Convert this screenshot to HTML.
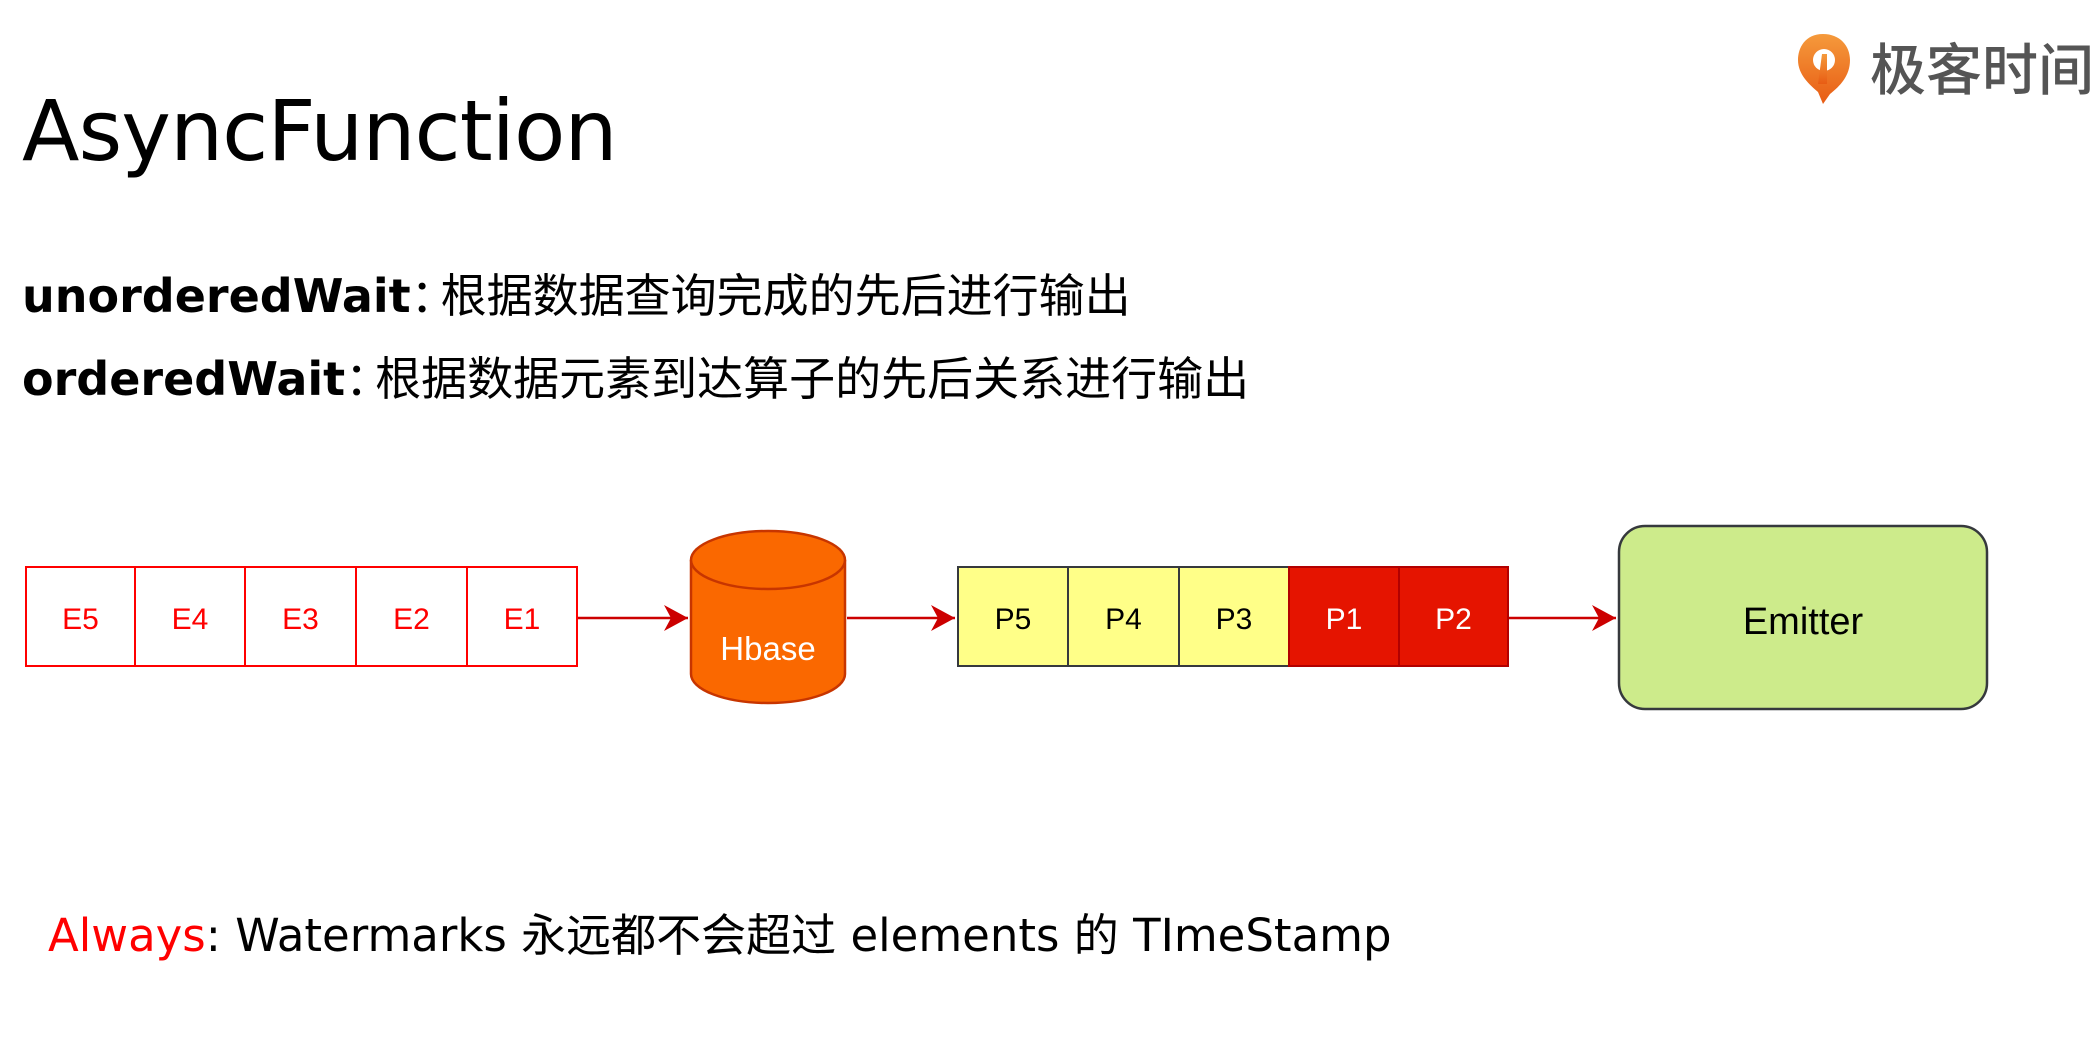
<!DOCTYPE html>
<html><head><meta charset="utf-8"><style>
html,body{margin:0;padding:0;background:#fff;width:2092px;height:1056px;overflow:hidden;position:relative;font-family:"Liberation Sans","Noto Sans CJK SC",sans-serif}
.abs{position:absolute;white-space:nowrap}
.title{left:22px;top:76px;font-size:84px;line-height:110px;color:#000;font-family:"DejaVu Sans","Liberation Sans",sans-serif;letter-spacing:-1px}
.l{font-size:46px;line-height:60px;color:#000}
.l b{font-family:"DejaVu Sans",sans-serif;font-weight:bold;letter-spacing:0px}
.l span{font-family:"Noto Sans CJK SC",sans-serif}
.l i{font-style:normal;font-family:"Noto Sans CJK SC",sans-serif;display:inline-block;width:30px;overflow:visible}
.cell{position:absolute;box-sizing:border-box;display:flex;align-items:center;justify-content:center;font-size:30px;padding-top:6px}
.bot{left:48px;top:906px;font-size:45px;line-height:60px;font-family:"DejaVu Sans","Noto Sans CJK SC",sans-serif}
</style></head><body>
<div class="abs title">AsyncFunction</div>
<div class="abs l" style="left:22px;top:263px"><b>unorderedWait</b><i>：</i><span>根据数据查询完成的先后进行输出</span></div>
<div class="abs l" style="left:22px;top:346px"><b>orderedWait</b><i>：</i><span>根据数据元素到达算子的先后关系进行输出</span></div>

<svg class="abs" style="left:0;top:0" width="2092" height="1056">
<defs><marker id="a" markerWidth="26" markerHeight="26" refX="24" refY="13" orient="auto" markerUnits="userSpaceOnUse"><path d="M0,0 L24,13 L0,26 L7,13Z" fill="#c00"/></marker>
<linearGradient id="g" x1="0" y1="0" x2="0" y2="1"><stop offset="0" stop-color="#f59a3c"/><stop offset="1" stop-color="#e85c14"/></linearGradient></defs>
<line x1="578" y1="618" x2="688" y2="618" stroke="#c00" stroke-width="2.5" marker-end="url(#a)"/>
<line x1="847" y1="618" x2="955" y2="618" stroke="#c00" stroke-width="2.5" marker-end="url(#a)"/>
<line x1="1509" y1="618" x2="1616" y2="618" stroke="#c00" stroke-width="2.5" marker-end="url(#a)"/>
<path d="M691,560 L691,674 A77,29 0 0 0 845,674 L845,560" fill="#fa6800" stroke="#c73500" stroke-width="2.5"/>
<ellipse cx="768" cy="560" rx="77" ry="29" fill="#fa6800" stroke="#c73500" stroke-width="2.5"/>
<text x="768" y="660" font-size="33" fill="#fff" text-anchor="middle" font-family="Liberation Sans">Hbase</text>
<rect x="1619" y="526" width="368" height="183" rx="26" fill="#cdeb8b" stroke="#36393d" stroke-width="2.5"/>
<text x="1803" y="634" font-size="38" fill="#000" text-anchor="middle" font-family="Liberation Sans">Emitter</text>
<!-- logo -->
<path d="M1823,34 C1805,34 1798,48 1798,60 C1798,75 1810,85 1818,92 L1823,104 L1830,94 C1840,86 1850,76 1850,60 C1850,46 1840,34 1823,34Z" fill="url(#g)"/>
<circle cx="1824" cy="60" r="11" fill="#fff"/>
<path d="M1822,54 L1827,54 L1827,84 L1818,84Z" fill="url(#g)"/>
<text x="1870" y="90" font-size="56" fill="#555" font-weight="500" font-family="Noto Sans CJK SC,sans-serif">极客时间</text>
</svg>

<div class="cell" style="left:25px;top:566px;width:111px;height:101px;border:2.5px solid #f00;color:#f00">E5</div>
<div class="cell" style="left:134px;top:566px;width:112px;height:101px;border:2.5px solid #f00;color:#f00">E4</div>
<div class="cell" style="left:244px;top:566px;width:113px;height:101px;border:2.5px solid #f00;color:#f00">E3</div>
<div class="cell" style="left:355px;top:566px;width:113px;height:101px;border:2.5px solid #f00;color:#f00">E2</div>
<div class="cell" style="left:466px;top:566px;width:112px;height:101px;border:2.5px solid #f00;color:#f00">E1</div>

<div class="cell" style="left:957px;top:566px;width:112px;height:101px;border:2.5px solid #36393d;background:#ffff88;color:#000">P5</div>
<div class="cell" style="left:1067px;top:566px;width:113px;height:101px;border:2.5px solid #36393d;background:#ffff88;color:#000">P4</div>
<div class="cell" style="left:1178px;top:566px;width:112px;height:101px;border:2.5px solid #36393d;background:#ffff88;color:#000">P3</div>
<div class="cell" style="left:1288px;top:566px;width:112px;height:101px;border:2.5px solid #b20000;background:#e51400;color:#fff">P1</div>
<div class="cell" style="left:1398px;top:566px;width:111px;height:101px;border:2.5px solid #b20000;background:#e51400;color:#fff">P2</div>

<div class="abs bot"><span style="color:#f00">Always</span>: Watermarks 永远都不会超过 elements 的 TImeStamp</div>
</body></html>
